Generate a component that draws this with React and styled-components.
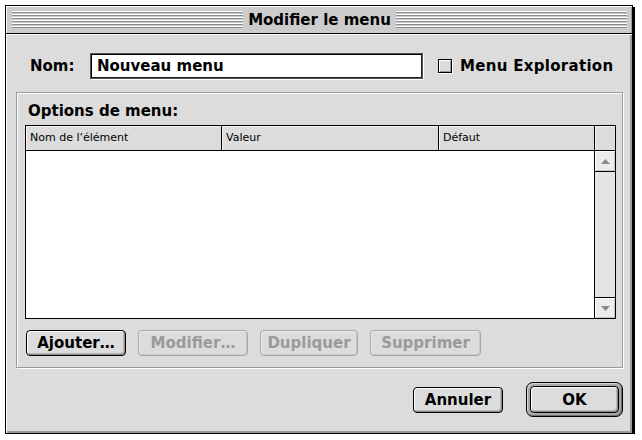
import React from "react";
import styled, { createGlobalStyle } from "styled-components";

const Global = createGlobalStyle`
  html, body { margin: 0; padding: 0; background: #fff; }
  body { font-family: "DejaVu Sans", "Liberation Sans", sans-serif; }
`;

const Page = styled.div`
  padding: 5px 0 0 5px;
`;

const Window = styled.div`
  box-sizing: border-box;
  width: 628px;
  height: 429px;
  border: 1px solid #000;
  box-shadow: 2px 2px 0 #000;
  background: #dcdcdc;
  display: flex;
  flex-direction: column;
`;

const TitleBar = styled.div`
  box-sizing: border-box;
  height: 28px;
  border-bottom: 1px solid #000;
  background: #cccccc;
  box-shadow: inset 1px 1px 0 #fff, inset -1px 0 0 #999;
  display: flex;
  align-items: center;
  padding: 0 5px 0 6px;
`;

const Stripes = styled.div`
  flex: 1;
  height: 18px;
  background: repeating-linear-gradient(
    to bottom,
    #ffffff 0 1px,
    #8c8c8c 1px 2px,
    #cccccc 2px 3px
  );
`;

const Title = styled.div`
  padding: 0 5px;
  font-weight: bold;
  font-size: 15px;
  color: #000;
  line-height: 18px;
  white-space: nowrap;
`;

const Content = styled.div`
  flex: 1;
  display: flex;
  flex-direction: column;
  padding: 19px 9px 0 10px;
  box-shadow: inset 1px 1px 0 #fff, inset -2px -2px 0 #999;
`;

const Row = styled.div`
  display: flex;
  align-items: center;
  height: 26px;
  padding-left: 14px;
`;

const BoldText = styled.span`
  font-weight: bold;
  font-size: 15px;
  color: ${(p) => (p.$disabled ? "#9a9a9a" : "#000")};
  white-space: nowrap;
`;

const NameLabel = styled(BoldText)`
  width: 60px;
`;

const Field = styled.div`
  box-sizing: border-box;
  width: 333px;
  height: 26px;
  border: 1px solid #555;
  box-shadow: inset 1px 1px 0 #000, inset -1px -1px 0 #222, 1px 1px 0 #fff;
  background: #fff;
  display: flex;
  align-items: center;
  padding-left: 6px;
`;

const Checkbox = styled.div`
  box-sizing: border-box;
  width: 14px;
  height: 14px;
  margin-left: 15px;
  margin-right: 8px;
  border: 1px solid #000;
  background: #dcdcdc;
  box-shadow: inset 1px 1px 0 #fff, inset -1px -1px 0 #999, 1px 1px 0 #fff;
`;

const ExploreLabel = styled(BoldText)`
  letter-spacing: 0.3px;
`;

const GroupBox = styled.div`
  box-sizing: border-box;
  margin-top: 13px;
  width: 607px;
  height: 276px;
  border: 1px solid #9a9a9a;
  box-shadow: inset 1px 1px 0 #fff, 1px 1px 0 #fff;
  padding: 8px 6px 0 8px;
  display: flex;
  flex-direction: column;
`;

const Legend = styled(BoldText)`
  padding-left: 3px;
  line-height: 20px;
  height: 24px;
`;

const Table = styled.div`
  box-sizing: border-box;
  width: 591px;
  height: 194px;
  border: 1px solid #000;
  background: #fff;
  display: flex;
  flex-direction: column;
`;

const HeaderRow = styled.div`
  display: grid;
  grid-template-columns: 196px 217px 156px 1fr;
  height: 24px;
  border-bottom: 1px solid #000;
  background: #dcdcdc;
`;

const HeaderCell = styled.div`
  box-sizing: border-box;
  border-right: ${(p) => (p.$last ? "none" : "1px solid #000")};
  font-size: 11px;
  color: #000;
  padding: 5px 0 0 4px;
  box-shadow: inset 1px 1px 0 #f4f4f4;
  white-space: nowrap;
`;

const Body = styled.div`
  flex: 1;
  display: flex;
`;

const ListArea = styled.div`
  flex: 1;
  background: #fff;
`;

const ScrollBar = styled.div`
  width: 20px;
  border-left: 1px solid #000;
  background: #e4e4e4;
  display: flex;
  flex-direction: column;
  justify-content: space-between;
`;

const Arrow = styled.div`
  height: 21px;
  box-sizing: border-box;
  background: #ececec;
  box-shadow: inset 1px 1px 0 #fff, inset -1px -1px 0 #c8c8c8;
  border-${(p) => (p.$down ? "top" : "bottom")}: 1px solid #000;
  display: flex;
  align-items: center;
  justify-content: center;
`;

const ButtonRow = styled.div`
  display: flex;
  gap: 12px;
  margin-top: 11px;
  padding-left: 1px;
`;

const Button = styled.div`
  box-sizing: border-box;
  width: ${(p) => p.$w}px;
  height: 26px;
  border: 1px solid ${(p) => (p.$disabled ? "#a6a6a6" : "#000")};
  border-radius: 4px;
  background: #dcdcdc;
  box-shadow: ${(p) =>
    p.$disabled
      ? "inset 1px 1px 0 #ececec, inset -1px -1px 0 #c8c8c8"
      : "inset 1px 1px 0 #fff, inset -1px -1px 0 #8a8a8a, inset -2px -2px 0 #b8b8b8"};
  display: flex;
  align-items: center;
  justify-content: center;
  font-weight: bold;
  font-size: 15px;
  color: ${(p) => (p.$disabled ? "#9a9a9a" : "#000")};
  white-space: nowrap;
`;

const DefaultButton = styled(Button)`
  flex: 1;
  height: auto;
`;

const Footer = styled.div`
  display: flex;
  justify-content: flex-end;
  align-items: center;
  gap: 23px;
  margin-top: 14px;
`;

const DefaultRing = styled.div`
  box-sizing: border-box;
  width: 97px;
  height: 35px;
  border: 1px solid #000;
  border-radius: 7px;
  background: #a8a8a8;
  box-shadow: inset 1px 1px 0 #d8d8d8, inset -1px -1px 0 #707070;
  padding: 3px;
  display: flex;
`;

const arrowUp = (
  <svg width="9" height="5" viewBox="0 0 9 5">
    <path d="M0 5 L4.5 0 L9 5 Z" fill="#8a8a8a" />
  </svg>
);
const arrowDown = (
  <svg width="9" height="5" viewBox="0 0 9 5">
    <path d="M0 0 L4.5 5 L9 0 Z" fill="#8a8a8a" />
  </svg>
);

export default function App() {
  return (
    <Page>
      <Global />
      <Window>
        <TitleBar>
          <Stripes />
          <Title>Modifier le menu</Title>
          <Stripes />
        </TitleBar>
        <Content>
          <Row>
            <NameLabel>Nom:</NameLabel>
            <Field>
              <BoldText>Nouveau menu</BoldText>
            </Field>
            <Checkbox />
            <ExploreLabel>Menu Exploration</ExploreLabel>
          </Row>
          <GroupBox>
            <Legend>Options de menu:</Legend>
            <Table>
              <HeaderRow>
                <HeaderCell>Nom de l’élément</HeaderCell>
                <HeaderCell>Valeur</HeaderCell>
                <HeaderCell>Défaut</HeaderCell>
                <HeaderCell $last />
              </HeaderRow>
              <Body>
                <ListArea />
                <ScrollBar>
                  <Arrow>{arrowUp}</Arrow>
                  <Arrow $down>{arrowDown}</Arrow>
                </ScrollBar>
              </Body>
            </Table>
            <ButtonRow>
              <Button $w={100}>Ajouter…</Button>
              <Button $w={110} $disabled>Modifier…</Button>
              <Button $w={98} $disabled>Dupliquer</Button>
              <Button $w={111} $disabled>Supprimer</Button>
            </ButtonRow>
          </GroupBox>
          <Footer>
            <Button $w={90}>Annuler</Button>
            <DefaultRing>
              <DefaultButton>OK</DefaultButton>
            </DefaultRing>
          </Footer>
        </Content>
      </Window>
    </Page>
  );
}
